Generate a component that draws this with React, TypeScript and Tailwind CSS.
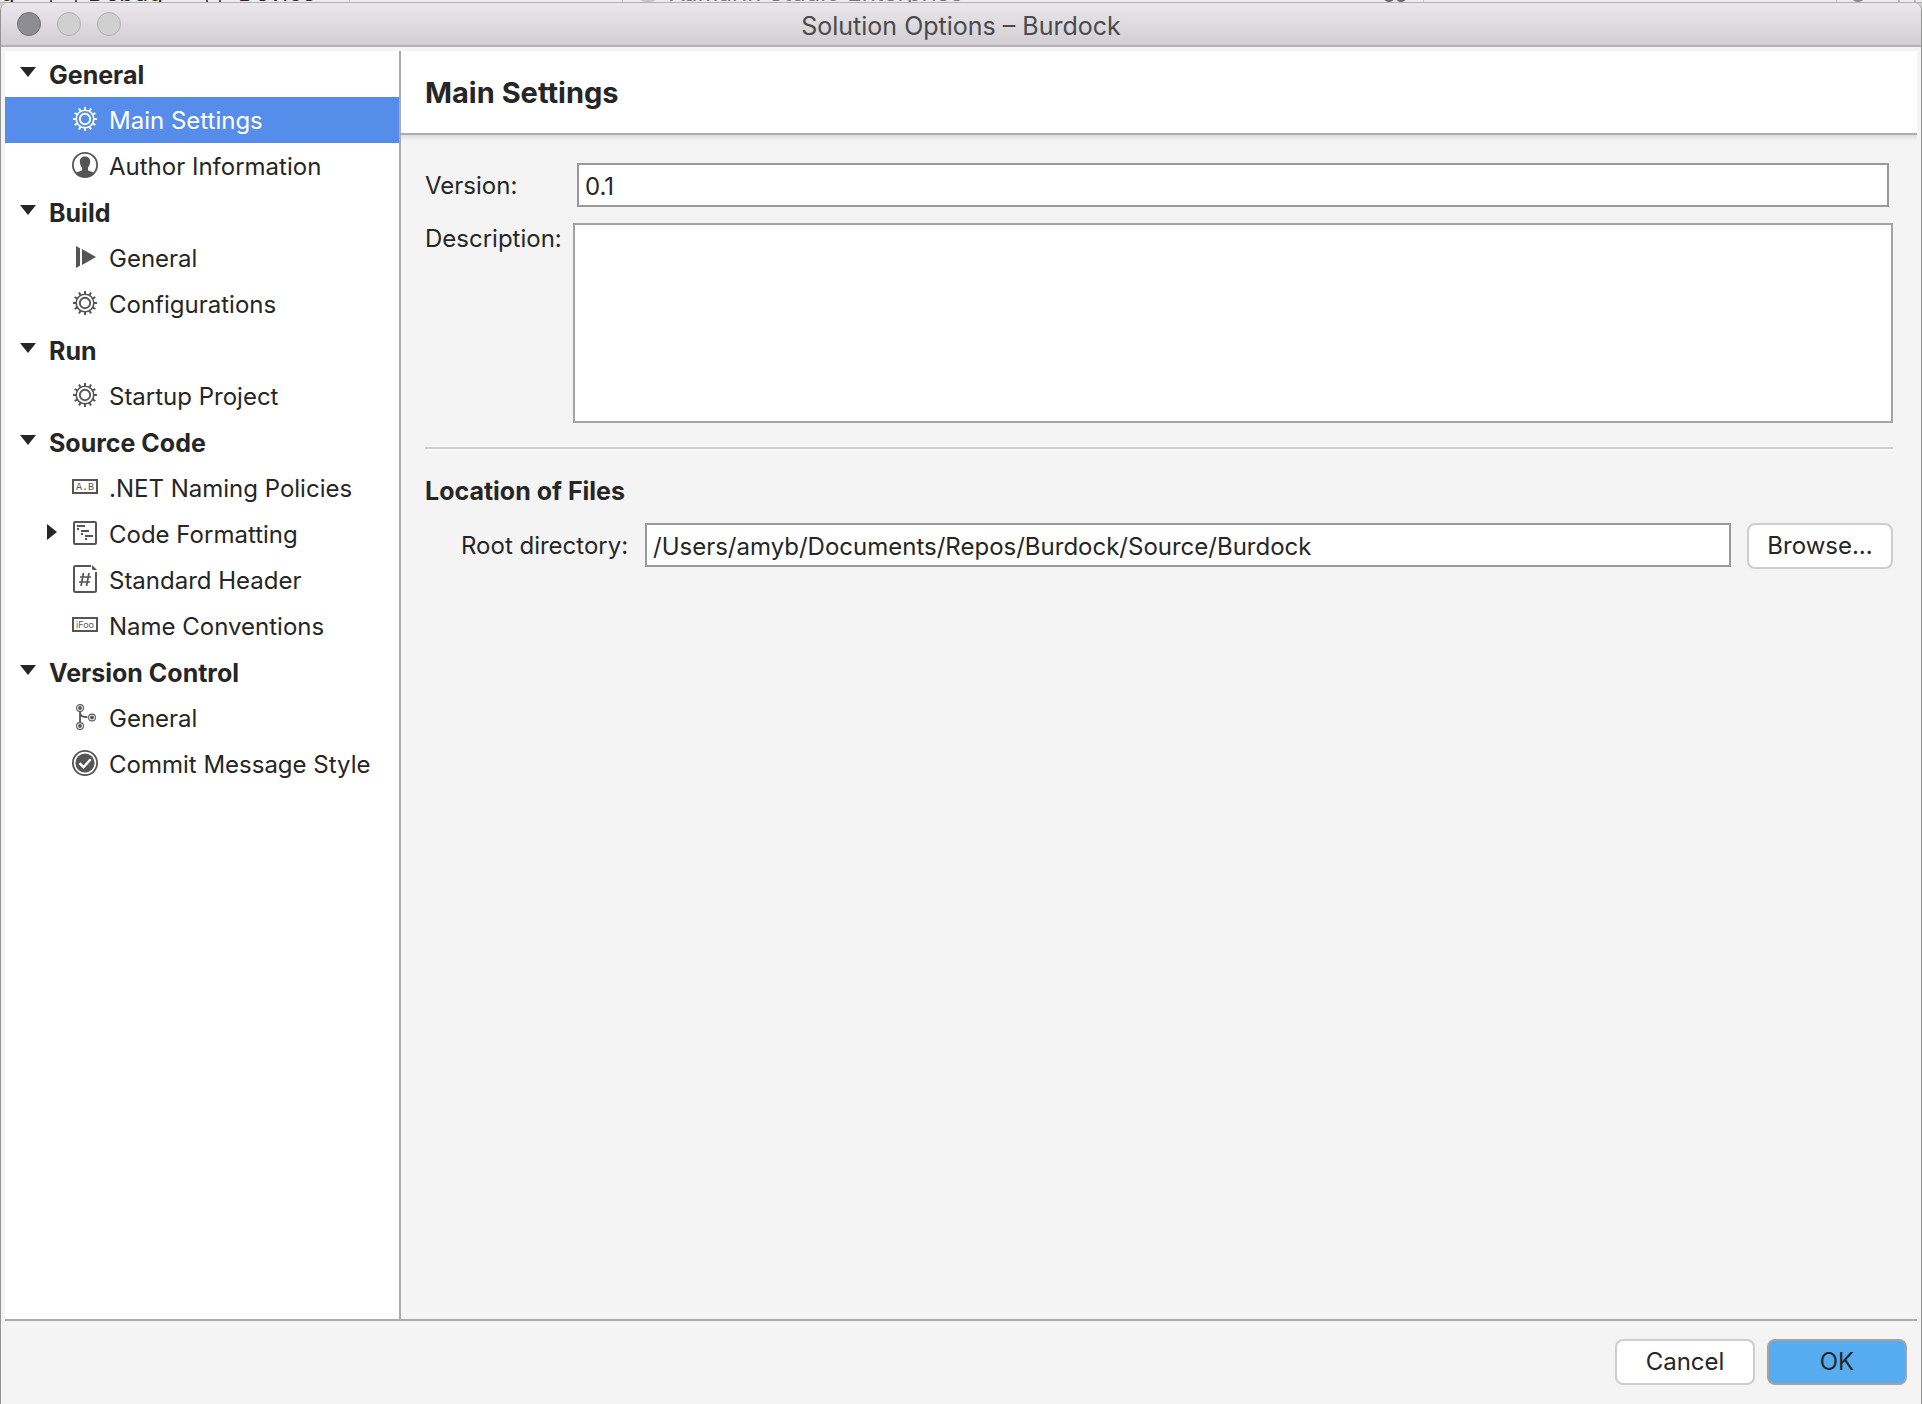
import React, {useState} from "react";

type IconName = "gear" | "author" | "build" | "naming" | "formatting" | "header" | "names" | "branch" | "commit";

interface TreeItem {
    id: string;
    label: string;
    icon: IconName;
    expandable?: boolean;
}

interface TreeSection {
    title: string;
    items: TreeItem[];
}

const sections: TreeSection[] = [
    {
        title: "General",
        items: [
            {id: "main", label: "Main Settings", icon: "gear"},
            {id: "author", label: "Author Information", icon: "author"},
        ],
    },
    {
        title: "Build",
        items: [
            {id: "build-general", label: "General", icon: "build"},
            {id: "configurations", label: "Configurations", icon: "gear"},
        ],
    },
    {
        title: "Run",
        items: [{id: "startup", label: "Startup Project", icon: "gear"}],
    },
    {
        title: "Source Code",
        items: [
            {id: "naming", label: ".NET Naming Policies", icon: "naming"},
            {id: "formatting", label: "Code Formatting", icon: "formatting", expandable: true},
            {id: "header", label: "Standard Header", icon: "header"},
            {id: "names", label: "Name Conventions", icon: "names"},
        ],
    },
    {
        title: "Version Control",
        items: [
            {id: "vc-general", label: "General", icon: "branch"},
            {id: "commit", label: "Commit Message Style", icon: "commit"},
        ],
    },
];

const teeth = [0, 30, 60, 90, 120, 150, 180, 210, 240, 270, 300, 330];

const drawings: Record<IconName, React.ReactNode> = {
    gear: (
        <>
            <circle cx="14" cy="14" r="8.8" fill="none" stroke="currentColor" strokeWidth="1.6" />
            <circle cx="14" cy="14" r="5.2" fill="none" stroke="currentColor" strokeWidth="1.9" />
            {teeth.map(angle => (
                <rect key={angle} x="13" y="2" width="2" height="3.4" fill="currentColor" transform={`rotate(${angle} 14 14)`} />
            ))}
        </>
    ),
    author: (
        <>
            <circle cx="14" cy="14" r="12.1" fill="none" stroke="currentColor" strokeWidth="1.8" />
            <path
                d="M14 5.6c3.2 0 5.2 2 5.2 5 0 2.6-.8 4.4-2.2 5.8v2.2c0 .8.4 1.1 1.2 1.4l4.8 1.6C21 24.6 17.7 26 14 26s-7-1.4-9-4.4l4.800-1.600c.8-.3 1.200-.6 1.200-1.400v-2.200c-1.400-1.400-2.200-3.200-2.200-5.800 0-3 2-5 5.200-5z"
                fill="currentColor"
            />
        </>
    ),
    build: (
        <>
            <path d="M5 3l4 2.3v17.4L5 25z" fill="currentColor" />
            <path d="M11 6l14 8-14 8z" fill="currentColor" />
        </>
    ),
    naming: (
        <>
            <rect x="2" y="7" width="24" height="13" fill="none" stroke="currentColor" strokeWidth="2" />
            <text x="14" y="17" textAnchor="middle" fontSize="10" fontFamily="Liberation Mono, monospace" fill="currentColor">A.B</text>
        </>
    ),
    formatting: (
        <>
            <rect x="3" y="3" width="22" height="22" rx="1" fill="none" stroke="currentColor" strokeWidth="2" />
            <path d="M6 7h8M10 12h8M14 17h8" stroke="currentColor" strokeWidth="2" />
            <path d="M6 9h2v2H6zM10 14h2v2h-2zM14 19h2v2h-2z" fill="currentColor" />
        </>
    ),
    header: (
        <>
            <path d="M20 1H4.500Q3 1 3 2.500v23Q3 27 4.500 27h19q1.500 0 1.500-1.500V7" fill="none" stroke="currentColor" strokeWidth="2" />
            <path d="M21 0l5 5h-3.500Q21 5 21 3.500z" fill="currentColor" />
            <path d="M12.500 8l-2.500 13M18 8l-2.500 13M9 12h11M8 17h11" fill="none" stroke="currentColor" strokeWidth="1.7" />
        </>
    ),
    names: (
        <>
            <rect x="2" y="7" width="24" height="13" fill="none" stroke="currentColor" strokeWidth="2" />
            <text x="14" y="17" textAnchor="middle" fontSize="9" fontFamily="Inter, sans-serif" fill="currentColor">iFoo</text>
        </>
    ),
    branch: (
        <>
            <path d="M9 8v11M9 9c0 4 2 5 7.500 5.200" fill="none" stroke="currentColor" strokeWidth="1.8" />
            <circle cx="9" cy="5" r="3.4" fill="none" stroke="currentColor" strokeWidth="1.1" />
            <circle cx="9" cy="5" r="1.9" fill="currentColor" />
            <circle cx="9" cy="23" r="3.4" fill="none" stroke="currentColor" strokeWidth="1.1" />
            <circle cx="9" cy="23" r="1.9" fill="currentColor" />
            <circle cx="21" cy="14.5" r="3.4" fill="none" stroke="currentColor" strokeWidth="1.1" />
            <circle cx="21" cy="14.5" r="1.9" fill="currentColor" />
        </>
    ),
    commit: (
        <>
            <circle cx="14" cy="14" r="12.1" fill="none" stroke="currentColor" strokeWidth="1.8" />
            <circle cx="14" cy="14" r="9.6" fill="currentColor" />
            <path d="M8.500 14.200l4 4 7.200-8" fill="none" stroke="white" strokeWidth="2.4" />
        </>
    ),
};

const TreeIcon = ({ name }: { name: IconName }) => (
    <svg viewBox="0 0 28 28" className="mb-1 size-7 shrink-0" aria-hidden="true">
        {drawings[name]}
    </svg>
);

const Sidebar = ({ selected, onSelect }: { selected: string; onSelect: (id: string) => void }) => {
    const [closed, setClosed] = useState<string[]>([]);

    const toggle = (title: string) => {
        setClosed(prev => prev.includes(title) ? prev.filter(t => t !== title) : [...prev, title]);
    };

    return (
        <nav className="w-[396px] shrink-0 border-r-2 border-b-2 border-[#ababab] bg-white">
            {sections.map(section => {
                const open = !closed.includes(section.title);
                return (
                    <div key={section.title}>
                        <button
                            onClick={() => toggle(section.title)}
                            aria-expanded={open}
                            className="flex h-[46px] w-full items-center gap-[13px] pt-0.5 pl-[15px] text-left text-[25px] font-bold"
                        >
                            <svg viewBox="0 0 16 10" className={open ? "mb-1.5 h-2.5 w-4" : "mb-1.5 h-2.5 w-4 -rotate-90"} aria-hidden="true">
                                <path d="M0 0h16L8 10z" fill="currentColor" />
                            </svg>
                            {section.title}
                        </button>
                        {open && (
                            <ul>
                                {section.items.map(item => (
                                    <li key={item.id}>
                                        <button
                                            onClick={() => onSelect(item.id)}
                                            className={`flex h-[46px] w-full items-center pt-0.5 pl-[42px] text-left ${item.id === selected ? "bg-[#568dea] text-white" : ""}`}
                                        >
                                            <span className="mr-3.5 mb-1.5 w-2.5">
                                                {item.expandable && (
                                                    <svg viewBox="0 0 10 16" className="h-4 w-2.5" aria-hidden="true">
                                                        <path d="M0 0v16l10-8z" fill="currentColor" />
                                                    </svg>
                                                )}
                                            </span>
                                            <span className={item.id === selected ? "text-white" : "text-[#555555]"}>
                                                <TreeIcon name={item.icon} />
                                            </span>
                                            <span className="ml-2.5">{item.label}</span>
                                        </button>
                                    </li>
                                ))}
                            </ul>
                        )}
                    </div>
                );
            })}
        </nav>
    );
};

const MainSettings = () => {
    const [version, setVersion] = useState("0.1");
    const [description, setDescription] = useState("");
    const [root, setRoot] = useState("/Users/amyb/Documents/Repos/Burdock/Source/Burdock");

    return (
        <main className="flex min-w-0 flex-1 flex-col border-b-2 border-[#ababab]">
            <header className="flex h-[84px] items-center border-b-2 border-[#ababab] bg-white px-6 pt-0.5">
                <h1 className="text-[29px] font-bold">Main Settings</h1>
            </header>
            <div className="h-1.5 bg-linear-to-b from-[#dedede] to-[#f4f4f4]" />

            <div className="px-6 pt-[22px]">
                <div className="flex items-center">
                    <label htmlFor="version" className="w-[148px] shrink-0 pt-0.5">Version:</label>
                    <input
                        id="version"
                        value={version}
                        onChange={e => setVersion(e.target.value)}
                        className="mx-1 h-11 min-w-0 flex-1 border-2 border-[#999999] bg-white px-1.5 pt-0.5 outline-none"
                    />
                </div>
                <div className="mt-4 flex items-start">
                    <label htmlFor="description" className="w-[148px] shrink-0">Description:</label>
                    <textarea
                        id="description"
                        value={description}
                        onChange={e => setDescription(e.target.value)}
                        className="h-[200px] min-w-0 flex-1 resize-none border-2 border-[#a3a3a3] bg-white px-1.5 py-1 outline-none"
                    />
                </div>

                <hr className="mt-6 h-1 border-t-2 border-[#cfcfcf] bg-[#fafafa]" />

                <h2 className="mt-6 text-[25px] font-bold">Location of Files</h2>
                <div className="mt-4 flex items-start pl-9">
                    <label htmlFor="root" className="w-[184px] shrink-0 leading-[46px]">Root directory:</label>
                    <input
                        id="root"
                        value={root}
                        onChange={e => setRoot(e.target.value)}
                        className="h-11 min-w-0 flex-1 border-2 border-[#999999] bg-white px-1.5 pt-0.5 outline-none"
                    />
                    <button className="ml-4 h-[46px] w-[146px] rounded-lg border-2 border-[#cdcdcd] bg-white">Browse...</button>
                </div>
            </div>
        </main>
    );
};

// Sliver of the IDE toolbar that stays visible above the dialog
const ToolbarSliver = () => (
    <div className="flex h-[3px] items-end overflow-hidden border-b border-[#b0b0b0] bg-[#ececec] leading-[18px] whitespace-nowrap">
        <span className="w-[50px]">g ›</span>
        <span className="h-4 w-[25px] border-l-2 border-[#555555]" />
        <span className="h-4 w-[13px] border-l-2 border-[#555555]" />
        <span className="w-[118px]">Debug ›</span>
        <span className="h-4 w-[13px] border-l-2 border-[#555555]" />
        <span className="h-4 w-[19px] border-l-2 border-[#555555]" />
        <span className="w-[111px]">Device</span>
        <span className="h-4 w-[273px] border-l border-[#c8c8c8]" />
        <span className="h-4 w-[15px] border-l border-[#c8c8c8]" />
        <span className="mr-2.5 h-[18px] w-[22px] rounded-full bg-[#c4c4c4]" />
        <span className="w-[714px] text-[#777777]">Xamarin Studio Enterprise</span>
        <span className="size-3 rounded-full border-2 border-[#666666]" />
        <span className="mr-4 size-3 rounded-full border-2 border-[#666666]" />
        <span className="h-4 flex-1 border-l border-[#c8c8c8]" />
        <span className="h-4 w-3.5 border-l border-[#c8c8c8]" />
        <span className="mr-8 size-4 rounded-full border-2 border-[#888888]" />
        <span className="h-4 w-4 border-l-2 border-[#bbbbbb]" />
        <span className="h-4 w-2 border-l-2 border-[#bbbbbb]" />
    </div>
);

const App = () => {
    const [selected, setSelected] = useState("main");

    return (
        <div className="flex min-h-screen flex-col bg-[#d0d0d0] font-[Inter,sans-serif] text-2xl leading-8 text-[#262626]">
            <ToolbarSliver />
            <div className="flex flex-1 flex-col overflow-hidden rounded-t-lg border-x border-[#949494] bg-[#f4f4f4]">
                <div className="grid h-11 grid-cols-[1fr_auto_1fr] items-center border-b-2 border-[#b3b1b3] bg-linear-to-b from-[#eae8eb] to-[#d1cfd2]">
                    <div className="flex gap-4 pl-4">
                        <button aria-label="Close" className="size-6 rounded-full border border-[#727176] bg-[#8e8d93]" />
                        <button aria-label="Minimize" className="size-6 rounded-full border border-[#b0b0b0] bg-[#d0d0d0]" />
                        <button aria-label="Zoom" className="size-6 rounded-full border border-[#b0b0b0] bg-[#d0d0d0]" />
                    </div>
                    <div className="pt-1 text-[25px] text-[#4b4a4c]">Solution Options – Burdock</div>
                </div>
                <div className="flex flex-1 px-1 pt-1">
                    <Sidebar selected={selected} onSelect={setSelected} />
                    <MainSettings />
                </div>
                <footer className="flex justify-end gap-3 px-3.5 pt-[18px] pb-[19px]">
                    <button className="h-[46px] w-[140px] rounded-lg border-2 border-[#cdcdcd] bg-white">Cancel</button>
                    <button className="h-[46px] w-[140px] rounded-lg border-2 border-[#a3a3a3] bg-[#56acef]">OK</button>
                </footer>
            </div>
        </div>
    );
};

export default App;
